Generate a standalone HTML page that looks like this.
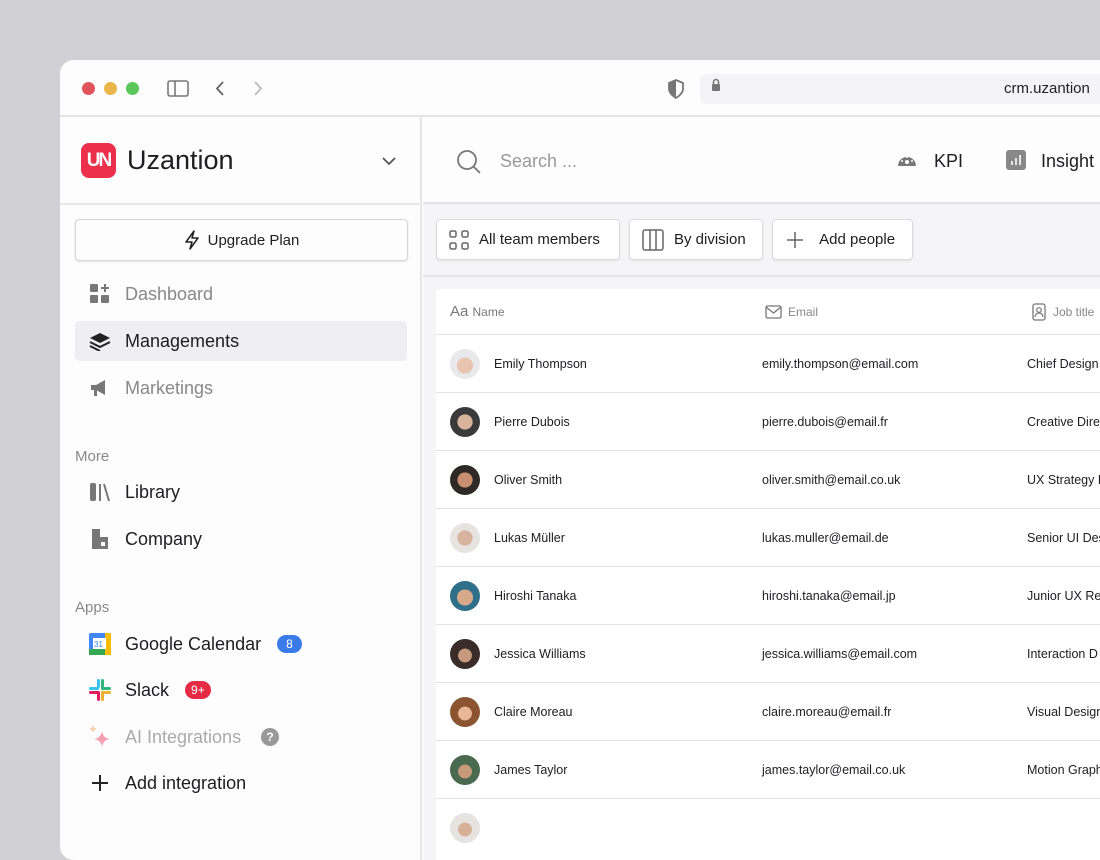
<!DOCTYPE html>
<html><head><meta charset="utf-8"><style>
*{margin:0;padding:0;box-sizing:border-box}
body{width:1100px;height:825px;overflow:hidden;background:#d1d0d5;font-family:"Liberation Sans",sans-serif;position:relative;color:#1d1d22}
.win{position:absolute;left:60px;top:60px;width:1060px;height:800px;background:#fff;border-radius:14px;overflow:hidden}
.tb{position:absolute;left:0;top:0;right:0;height:57px;background:#fdfdfe;border-bottom:2px solid #e3e3e6}
.dot{position:absolute;top:22px;width:13px;height:13px;border-radius:50%}
.side{position:absolute;left:0;top:57px;width:362px;bottom:0;background:#fdfdfe;border-right:2px solid #e6e6e9}
.main{position:absolute;left:363px;top:57px;right:0;bottom:0;background:#f5f5f7}
.abs{position:absolute}
.nav{position:absolute;left:15px;width:332px;height:40px;font-size:18px;display:flex;align-items:center}
.nav .ic{width:50px;display:flex;justify-content:center}
.btn{position:absolute;top:102px;height:41px;background:#fff;border:1px solid #dcdce0;border-radius:4px;box-shadow:0 1px 2px rgba(0,0,0,.08);font-size:15px;display:flex;align-items:center;padding:0 12px;gap:10px}
.row{position:absolute;left:0;right:0;height:58px;border-top:1.5px solid #e3e3e6;font-size:12.5px}
.row .av{position:absolute;left:14px;top:14px;width:30px;height:30px;border-radius:50%}
.row .n{position:absolute;left:58px;top:22px}
.row .e{position:absolute;left:326px;top:22px}
.row .j{position:absolute;left:591px;top:22px;white-space:nowrap}
</style></head><body>
<div class="win">
 <div class="tb">
  <div class="dot" style="left:22px;background:#e0535c"></div>
  <div class="dot" style="left:44px;background:#eab64a"></div>
  <div class="dot" style="left:66px;background:#5ac759"></div>
  <svg class="abs" style="left:107px;top:20px" width="22" height="17" viewBox="0 0 22 17"><rect x="1" y="1" width="20" height="15" rx="2" fill="none" stroke="#777" stroke-width="1.6"/><line x1="8" y1="1" x2="8" y2="16" stroke="#777" stroke-width="1.6"/></svg>
  <svg class="abs" style="left:154px;top:20px" width="12" height="17"><path d="M9 2L3 8.5L9 15" fill="none" stroke="#666" stroke-width="1.8"/></svg>
  <svg class="abs" style="left:192px;top:20px" width="12" height="17"><path d="M3 2L9 8.5L3 15" fill="none" stroke="#bbb" stroke-width="1.8"/></svg>
  <svg class="abs" style="left:607px;top:19px" width="18" height="20"><path d="M9 1L16 4V10C16 15 9 19 9 19C9 19 2 15 2 10V4Z" fill="none" stroke="#777" stroke-width="1.8"/><path d="M9 1L2 4V10C2 15 9 19 9 19Z" fill="#777"/></svg>
  <div class="abs" style="left:640px;top:14px;width:420px;height:30px;background:#f4f4f6;border-radius:6px"></div>
  <svg class="abs" style="left:651px;top:18px" width="10" height="14"><path d="M2.5 6V4a2.5 2.5 0 015 0v2" fill="none" stroke="#777" stroke-width="1.5"/><rect x="1" y="6" width="8" height="7" rx="1" fill="#777"/></svg>
  <div class="abs" style="left:944px;top:20px;font-size:15px;color:#222">crm.uzantion</div>
 </div>
 <div class="side">
  <div class="abs" style="left:21px;top:26px;width:35px;height:35px;border-radius:8px;background:#ec2f4b;color:#fff;font-weight:bold;font-size:19px;text-align:center;line-height:35px;letter-spacing:-2px">UN</div>
  <div class="abs" style="left:67px;top:28px;font-size:27px;font-weight:500">Uzantion</div>
  <svg class="abs" style="left:321px;top:39px" width="16" height="10"><path d="M2 2L8 8L14 2" fill="none" stroke="#555" stroke-width="1.8"/></svg>
  <div class="abs" style="left:0;top:86px;width:362px;height:2px;background:#e6e6e9"></div>
  <div class="abs" style="left:15px;top:102px;width:333px;height:42px;border:1px solid #d6d6da;border-radius:4px;box-shadow:0 1px 2px rgba(0,0,0,.1);display:flex;align-items:center;justify-content:center;font-size:15px;gap:8px">
   <svg width="16" height="20"><path d="M10 1L2 12H8L6 19L14 8H8Z" fill="none" stroke="#222" stroke-width="1.5" stroke-linejoin="round"/></svg>Upgrade Plan</div>
  <div class="nav" style="top:157px;color:#888"><div class="ic"><svg width="22" height="22"><rect x="1" y="1" width="8" height="8" rx="1" fill="#777"/><rect x="1" y="12" width="8" height="8" rx="1" fill="#777"/><rect x="12" y="12" width="8" height="8" rx="1" fill="#777"/><path d="M16 1v8M12 5h8" stroke="#777" stroke-width="2"/></svg></div>Dashboard</div>
  <div class="nav" style="top:204px;background:#efeff2;border-radius:4px"><div class="ic"><svg width="22" height="20"><path d="M11 2L21 7L11 12L1 7Z" fill="#222"/><path d="M1 11L11 16L21 11M1 15L11 20" fill="none" stroke="#222" stroke-width="2"/></svg></div>Managements</div>
  <div class="nav" style="top:251px;color:#888"><div class="ic"><svg width="22" height="20"><path d="M2 7h5l9-5v15l-9-5H2Z" fill="#777"/><rect x="5" y="12" width="3" height="6" fill="#777"/></svg></div>Marketings</div>
  <div class="abs" style="left:15px;top:331px;font-size:15px;color:#888">More</div>
  <div class="nav" style="top:355px"><div class="ic"><svg width="22" height="20"><rect x="1" y="1" width="6" height="18" rx="2" fill="#777"/><path d="M11 2v17M15 2l5 17" stroke="#777" stroke-width="2"/></svg></div>Library</div>
  <div class="nav" style="top:402px"><div class="ic"><svg width="20" height="22"><path d="M2 1h8v8h8v12H2Z" fill="#777"/><rect x="11" y="14" width="4" height="4" fill="#fff"/></svg></div>Company</div>
  <div class="abs" style="left:15px;top:482px;font-size:15px;color:#888">Apps</div>
  <div class="nav" style="top:507px"><div class="ic"><svg width="24" height="24"><rect x="1" y="1" width="22" height="22" rx="2" fill="#4285f4"/><rect x="1" y="17" width="22" height="6" fill="#34a853"/><rect x="17" y="1" width="6" height="22" fill="#fbbc04"/><rect x="5" y="6" width="13" height="11" fill="#fff"/><text x="6" y="15" font-size="8" fill="#4285f4" font-family="Liberation Sans">31</text></svg></div>Google Calendar<span style="margin-left:16px;background:#3b7be8;color:#fff;font-size:12px;border-radius:10px;padding:2px 9px">8</span></div>
  <div class="nav" style="top:553px"><div class="ic"><svg width="24" height="24"><rect x="9" y="1" width="3" height="9" rx="1.5" fill="#36c5f0"/><rect x="1" y="9" width="10" height="3" rx="1.5" fill="#36c5f0"/><rect x="13" y="1" width="3" height="10" rx="1.5" fill="#2eb67d"/><rect x="13" y="9" width="10" height="3" rx="1.5" fill="#2eb67d"/><rect x="1" y="13" width="10" height="3" rx="1.5" fill="#e01e5a"/><rect x="9" y="13" width="3" height="10" rx="1.5" fill="#e01e5a"/><rect x="13" y="13" width="10" height="3" rx="1.5" fill="#ecb22e"/><rect x="13" y="13" width="3" height="10" rx="1.5" fill="#ecb22e"/></svg></div>Slack<span style="margin-left:16px;background:#e42a45;color:#fff;font-size:12px;border-radius:10px;padding:2px 6px">9+</span></div>
  <div class="nav" style="top:600px;color:#aaa"><div class="ic"><svg width="24" height="24"><path d="M14 6Q15 13 22 14Q15 15 14 22Q13 15 6 14Q13 13 14 6Z" fill="#f3a0b2"/><path d="M5 1v6M2 4h6" stroke="#f7c7a0" stroke-width="1.5"/></svg></div>AI Integrations<span style="margin-left:20px;width:18px;height:18px;border-radius:50%;background:#999;color:#fff;font-size:12px;text-align:center;line-height:18px;font-weight:bold">?</span></div>
  <div class="nav" style="top:646px"><div class="ic"><svg width="20" height="20"><path d="M10 2v16M2 10h16" stroke="#222" stroke-width="2"/></svg></div>Add integration</div>
 </div>
 <div class="main">
  <div class="abs" style="left:0;top:0;right:0;height:87px;background:#fdfdfe;border-bottom:2px solid #e3e3e6"></div>
  <svg class="abs" style="left:33px;top:32px" width="26" height="26"><circle cx="11" cy="11" r="9" fill="none" stroke="#777" stroke-width="1.8"/><path d="M17.5 17.5L24 24" stroke="#777" stroke-width="1.8"/></svg>
  <div class="abs" style="left:77px;top:34px;font-size:18px;color:#999">Search ...</div>
  <svg class="abs" style="left:474px;top:35px" width="20" height="16"><path d="M1 14A9 9 0 0119 14Z" fill="#777"/><circle cx="10" cy="10" r="2" fill="#fff"/><circle cx="5" cy="9" r="1" fill="#fff"/><circle cx="15" cy="9" r="1" fill="#fff"/><circle cx="10" cy="5" r="1" fill="#fff"/></svg>
  <div class="abs" style="left:511px;top:34px;font-size:18px">KPI</div>
  <svg class="abs" style="left:583px;top:33px" width="20" height="20"><rect width="20" height="20" rx="3" fill="#888"/><path d="M6 15v-4M10 15V8M14 15V5" stroke="#fff" stroke-width="1.6"/></svg>
  <div class="abs" style="left:618px;top:34px;font-size:18px">Insight</div>
  <div class="abs" style="left:0;top:158px;right:0;height:1.5px;background:#e3e3e6"></div>
  <div class="btn" style="left:13px;width:184px"><svg width="20" height="20"><g fill="none" stroke="#666" stroke-width="1.5"><rect x="1" y="1" width="6" height="6" rx="1.5"/><rect x="13" y="1" width="6" height="6" rx="1.5"/><rect x="1" y="13" width="6" height="6" rx="1.5"/><rect x="13" y="13" width="6" height="6" rx="1.5"/></g></svg>All team members</div>
  <div class="btn" style="left:206px;width:134px"><svg width="22" height="22"><g fill="none" stroke="#666" stroke-width="1.5"><rect x="1" y="1" width="20" height="20" rx="2"/><path d="M8 1v20M14 1v20"/></g></svg>By division</div>
  <div class="btn" style="left:349px;width:141px"><svg width="20" height="20"><path d="M10 2v16M2 10h16" stroke="#666" stroke-width="1.5"/></svg>&nbsp;Add people</div>
  <div class="abs" style="left:13px;top:172px;width:700px;height:600px;background:#fff;border-radius:4px">
   <div class="abs" style="left:14px;top:14px;font-size:15px;color:#777">Aa <span style="font-size:12px">Name</span></div>
   <svg class="abs" style="left:329px;top:16px" width="18" height="14"><rect x="1" y="1" width="15" height="12" rx="1.5" fill="none" stroke="#777" stroke-width="1.3"/><path d="M1 2L8.5 8L16 2" fill="none" stroke="#777" stroke-width="1.3"/></svg>
   <div class="abs" style="left:352px;top:16px;font-size:12px;color:#888">Email</div>
   <svg class="abs" style="left:596px;top:14px" width="14" height="18"><rect x="1" y="1" width="12" height="16" rx="2" fill="none" stroke="#777" stroke-width="1.3"/><circle cx="7" cy="7" r="2.3" fill="none" stroke="#777" stroke-width="1.2"/><path d="M3 14a4 4 0 018 0" fill="none" stroke="#777" stroke-width="1.2"/></svg>
   <div class="abs" style="left:617px;top:16px;font-size:12px;color:#888">Job title</div>
   <div class="row" style="top:45px"><div class="av" style="background:radial-gradient(circle at 50% 55%,#e8c5b0 35%,#e9e9ec 37%)"></div><div class="n">Emily Thompson</div><div class="e">emily.thompson@email.com</div><div class="j">Chief Design</div></div>
   <div class="row" style="top:103px"><div class="av" style="background:radial-gradient(circle at 50% 50%,#d9b49c 35%,#3a3a3a 37%)"></div><div class="n">Pierre Dubois</div><div class="e">pierre.dubois@email.fr</div><div class="j">Creative Dire</div></div>
   <div class="row" style="top:161px"><div class="av" style="background:radial-gradient(circle at 50% 50%,#c89070 35%,#2f2a25 37%)"></div><div class="n">Oliver Smith</div><div class="e">oliver.smith@email.co.uk</div><div class="j">UX Strategy L</div></div>
   <div class="row" style="top:219px"><div class="av" style="background:radial-gradient(circle at 50% 50%,#d8b4a0 35%,#e6e3e0 37%)"></div><div class="n">Lukas Müller</div><div class="e">lukas.muller@email.de</div><div class="j">Senior UI Des</div></div>
   <div class="row" style="top:277px"><div class="av" style="background:radial-gradient(circle at 50% 55%,#d6a98a 35%,#2f6f8a 37%)"></div><div class="n">Hiroshi Tanaka</div><div class="e">hiroshi.tanaka@email.jp</div><div class="j">Junior UX Res</div></div>
   <div class="row" style="top:335px"><div class="av" style="background:radial-gradient(circle at 50% 55%,#c79a80 30%,#3a2c28 32%)"></div><div class="n">Jessica Williams</div><div class="e">jessica.williams@email.com</div><div class="j">Interaction D</div></div>
   <div class="row" style="top:393px"><div class="av" style="background:radial-gradient(circle at 50% 55%,#e8b898 30%,#8a5530 32%)"></div><div class="n">Claire Moreau</div><div class="e">claire.moreau@email.fr</div><div class="j">Visual Design</div></div>
   <div class="row" style="top:451px"><div class="av" style="background:radial-gradient(circle at 50% 55%,#c99a7a 30%,#4a6a50 32%)"></div><div class="n">James Taylor</div><div class="e">james.taylor@email.co.uk</div><div class="j">Motion Graph</div></div>
   <div class="row" style="top:509px"><div class="av" style="background:radial-gradient(circle at 50% 55%,#d8b098 30%,#e6e3e0 32%)"></div></div>
  </div>
 </div>
</div>
</body></html>
